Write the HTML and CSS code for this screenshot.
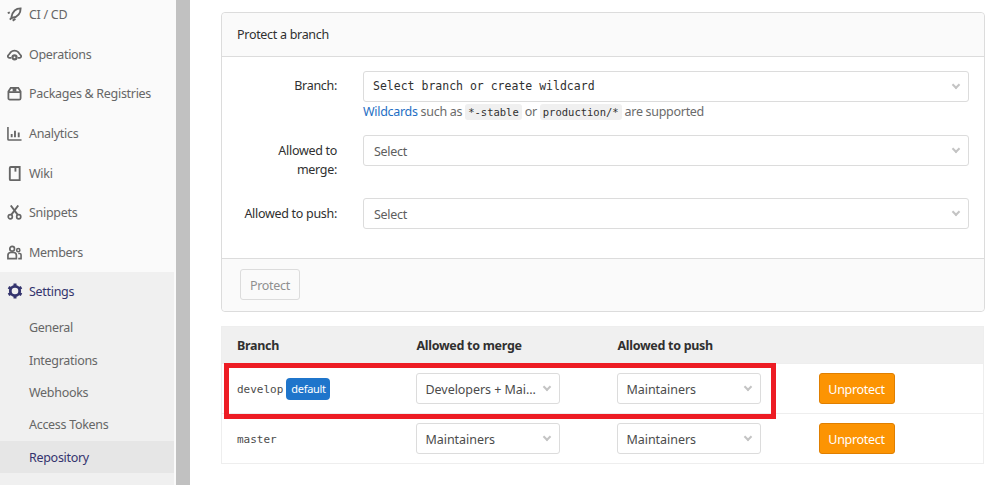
FILE: index.html
```html
<!DOCTYPE html>
<html lang="en">

<head>
  <meta charset="UTF-8">
  <title>Repository Settings</title>
  <link rel="stylesheet" href="styles.css">
</head>

<body>
  <div class="layout">
    <aside class="sidebar">
      <ul class="nav">
        <li class="nav-item">
          <svg class="nav-icon" viewBox="0 0 16 16"><path d="M14.500 1.500C9.500 1.500 6 5 4.800 10.500l1 1C11 10.500 14.500 7 14.500 1.500z" fill="none" stroke="currentColor" stroke-width="2"/><path d="M.8 6.500l2.200-.8M6 14.500l3-1.800M3 13.500l2-2" fill="none" stroke="currentColor" stroke-width="2"/></svg>
          CI / CD
        </li>
        <li class="nav-item">
          <svg class="nav-icon" viewBox="0 0 16 16"><path d="M4.500 11.500H2.500a1.500 1.500 0 0 1-1-2.700L4 5.500A5.500 5.500 0 0 1 12 5.500L14.500 8.800a1.500 1.500 0 0 1-1 2.700h-2" fill="none" stroke="currentColor" stroke-width="1.800"/><circle cx="8" cy="11" r="2.200" fill="none" stroke="currentColor" stroke-width="2.400"/></svg>
          Operations
        </li>
        <li class="nav-item">
          <svg class="nav-icon" viewBox="0 0 16 16"><path d="M4 2h8l2.500 4v7a1.500 1.500 0 0 1-1.500 1.500H3A1.500 1.500 0 0 1 1.500 13V6zM2 6.500h12" fill="none" stroke="currentColor" stroke-width="1.900"/><path d="M6 2h4v4H6z" fill="currentColor"/></svg>
          Packages &amp; Registries
        </li>
        <li class="nav-item">
          <svg class="nav-icon" viewBox="0 0 16 16"><path d="M1 1V14a1 1 0 0 0 1 1h13.500" fill="none" stroke="currentColor" stroke-width="1.700"/><path d="M5 8.500v3.500M8.500 5v7M12.500 7v5" fill="none" stroke="currentColor" stroke-width="2"/></svg>
          Analytics
        </li>
        <li class="nav-item">
          <svg class="nav-icon" viewBox="0 0 16 16"><path d="M4 1h9.500V15H4a1 1 0 0 1-1-1V2a1 1 0 0 1 1-1z" fill="none" stroke="currentColor" stroke-width="2"/><path d="M8 2h2v4H8z" fill="currentColor"/></svg>
          Wiki
        </li>
        <li class="nav-item">
          <svg class="nav-icon" viewBox="0 0 16 16"><path d="M4 0.500l7.500 10M12 0.500l-7.500 10" fill="none" stroke="currentColor" stroke-width="2"/><circle cx="3.500" cy="12.500" r="2.200" fill="none" stroke="currentColor" stroke-width="1.800"/><circle cx="12.500" cy="12.500" r="2.200" fill="none" stroke="currentColor" stroke-width="1.800"/></svg>
          Snippets
        </li>
        <li class="nav-item">
          <svg class="nav-icon" viewBox="0 0 16 16"><circle cx="5.500" cy="4" r="2.500" fill="none" stroke="currentColor" stroke-width="1.800"/><path d="M1 14.500V11a3 3 0 0 1 3-3h3a3 3 0 0 1 3 3v3.500z" fill="none" stroke="currentColor" stroke-width="1.800"/><circle cx="12" cy="5.500" r="1.700" fill="none" stroke="currentColor" stroke-width="1.700"/><path d="M12 9h1.500a1.500 1.500 0 0 1 1.500 1.500v4h-3" fill="none" stroke="currentColor" stroke-width="1.700"/></svg>
          Members
        </li>
      </ul>
      <div class="settings-group">
        <div class="nav-item nav-item-active">
          <svg class="nav-icon nav-icon-big" viewBox="0 0 16 16"><circle cx="8" cy="8" r="4.700" fill="none" stroke="currentColor" stroke-width="2.800"/><path d="M8 0.500v3M8 12.500v3M1.500 4.250l2.600 1.500M11.900 10.250l2.600 1.500M1.500 11.750l2.600-1.500M11.900 5.750l2.600-1.500" fill="none" stroke="currentColor" stroke-width="3"/></svg>
          Settings
        </div>
        <ul class="subnav">
          <li class="subnav-item">General</li>
          <li class="subnav-item">Integrations</li>
          <li class="subnav-item">Webhooks</li>
          <li class="subnav-item">Access Tokens</li>
          <li class="subnav-item subnav-item-active">Repository</li>
        </ul>
      </div>
    </aside>
    <div class="gutter"></div>

    <main class="content">
      <form class="card">
        <div class="card-header">Protect a branch</div>
        <div class="card-body">
          <div class="form-row form-row-branch">
            <label class="form-label form-label-first">Branch:</label>
            <div class="form-field">
              <div class="select select-mono">Select branch or create wildcard <span class="chevron"></span></div>
              <p class="help"><a class="link">Wildcards</a> such as <code>*-stable</code> or <code>production/*</code> are supported</p>
            </div>
          </div>
          <div class="form-row form-row-merge">
            <label class="form-label">Allowed to merge:</label>
            <div class="form-field">
              <div class="select select-muted">Select <span class="chevron"></span></div>
            </div>
          </div>
          <div class="form-row">
            <label class="form-label">Allowed to push:</label>
            <div class="form-field">
              <div class="select select-muted">Select <span class="chevron"></span></div>
            </div>
          </div>
        </div>
        <div class="card-footer">
          <button type="button" class="btn-protect">Protect</button>
        </div>
      </form>

      <div class="table-wrap">
        <table class="branches">
          <thead>
            <tr>
              <th class="col-branch">Branch</th>
              <th class="col-merge">Allowed to merge</th>
              <th class="col-push">Allowed to push</th>
              <th></th>
            </tr>
          </thead>
          <tbody>
            <tr>
              <td><span class="ref">develop</span> <span class="badge">default</span></td>
              <td><div class="select select-small"><span class="select-text">Developers + Mai...</span> <span class="chevron"></span></div></td>
              <td><div class="select select-small"><span class="select-text">Maintainers</span> <span class="chevron"></span></div></td>
              <td class="cell-action"><button type="button" class="btn-unprotect">Unprotect</button></td>
            </tr>
            <tr>
              <td><span class="ref">master</span></td>
              <td><div class="select select-small"><span class="select-text">Maintainers</span> <span class="chevron"></span></div></td>
              <td><div class="select select-small"><span class="select-text">Maintainers</span> <span class="chevron"></span></div></td>
              <td class="cell-action"><button type="button" class="btn-unprotect">Unprotect</button></td>
            </tr>
          </tbody>
        </table>
        <div class="highlight"></div>
      </div>
    </main>
  </div>
</body>

</html>
```

FILE: styles.css
```css
* {
  box-sizing: border-box;
}

html,
body {
  height: 100%;
  margin: 0;
  overflow: hidden;
}

body {
  font-family: "Noto Sans", Arial, sans-serif;
  font-size: 12.5px;
  letter-spacing: -0.3px;
  color: #303030;
  background: #fff;
}

ul {
  list-style: none;
  margin: 0;
  padding: 0;
}

.layout {
  display: flex;
  height: 485px;
}

.sidebar {
  width: 176px;
  flex: none;
  background: #fafafa;
  margin-top: -5.500px;
  color: #666;
}

.gutter {
  width: 14px;
  flex: none;
  background: #c1c1c1;
}

.nav-item {
  display: flex;
  align-items: center;
  height: 39.700px;
  padding-left: 7px;
}

.nav-icon {
  width: 15px;
  height: 15px;
  margin-right: 7px;
  flex: none;
}

.nav-icon-big {
  width: 16px;
  height: 16px;
  margin-right: 6px;
}

.settings-group {
  height: 220px;
  background: #f0f0f0;
  margin-right: 2px;
}

.nav-item-active {
  color: #34346e;
  height: 38px;
}

.subnav {
  margin-top: 1px;
}

.subnav-item {
  height: 32.400px;
  line-height: 33px;
  padding-left: 29px;
}

.subnav-item-active {
  background: #e6e6e6;
  color: #34346e;
}

.content {
  flex: 1;
  padding: 12px 11px 0 31px;
}

.card {
  border: 1px solid #dcdcdc;
  border-radius: 4px;
  height: 300px;
}

.card-header {
  height: 44px;
  line-height: 44px;
  padding-left: 15px;
  background: #fafafa;
  border-bottom: 1px solid #dcdcdc;
  border-radius: 4px 4px 0 0;
}

.card-body {
  height: 201px;
  padding: 14px 15px 0 0;
}

.form-row {
  display: flex;
}

.form-row-branch {
  height: 64px;
}

.form-row-merge {
  height: 63px;
}

.form-label {
  width: 98px;
  flex: none;
  margin: 0 26px 0 17px;
  text-align: right;
  line-height: 19px;
  padding-top: 6px;
}

.form-label-first {
  padding-top: 5px;
}

.form-field {
  flex: 1;
}

.select {
  position: relative;
  height: 31px;
  line-height: 31px;
  padding-left: 9px;
  border: 1px solid #dcdcdc;
  border-radius: 3px;
  background: #fff;
  color: #303030;
}

.select-mono {
  font-family: "DejaVu Sans Mono", monospace;
  font-size: 11.500px;
  line-height: 28px;
  letter-spacing: 0;
}

.select-muted {
  padding-left: 10px;
  color: #5e5e5e;
}

.select-small {
  width: 144px;
}

.select-text {
  letter-spacing: -0.05px;
  color: #4b4b4b;
}

.chevron {
  position: absolute;
  right: 9px;
  top: 10px;
  width: 6px;
  height: 6px;
  border-right: 2px solid #c4c4c4;
  border-bottom: 2px solid #c4c4c4;
  transform: rotate(45deg);
}

.help {
  margin: 0;
  line-height: 19px;
  color: #6b6b6b;
}

.link {
  color: #1f6fc4;
}

code {
  font-family: "DejaVu Sans Mono", monospace;
  font-size: 10.500px;
  letter-spacing: 0;
  color: #303030;
  background: #f0f0f0;
  border-radius: 3px;
  padding: 2px 3px;
}

.card-footer {
  height: 53px;
  padding: 10px 18px;
  background: #fafafa;
  border-top: 1px solid #dcdcdc;
  border-radius: 0 0 4px 4px;
}

.btn-protect {
  width: 60px;
  height: 31px;
  padding: 1px 0 0;
  font: inherit;
  letter-spacing: inherit;
  color: #8f8f8f;
  background: #fafafa;
  border: 1px solid #dcdcdc;
  border-radius: 3px;
}

.table-wrap {
  position: relative;
  margin-top: 14px;
  width: 763px;
}

.branches {
  width: 100%;
  table-layout: fixed;
  border-collapse: collapse;
  border: 1px solid #eee;
}

.branches th {
  height: 37px;
  text-align: left;
  padding-left: 16px;
  background: #f0f0f0;
  font-weight: 700;
}

.branches .col-branch {
  width: 179px;
  padding-left: 15px;
}

.col-merge,
.col-push {
  width: 201px;
}

.branches td {
  height: 50px;
  padding-left: 15px;
  border-top: 1px solid #eee;
}

.branches .cell-action {
  padding-left: 16px;
}

.ref {
  font-family: "DejaVu Sans Mono", monospace;
  font-size: 11px;
  letter-spacing: 0;
  color: #4b4b4b;
}

.badge {
  display: inline-block;
  height: 22px;
  line-height: 22px;
  padding: 0 4px 0 5px;
  font-size: 11px;
  color: #fff;
  background: #1f75cb;
  border-radius: 4px;
}

.btn-unprotect {
  width: 76px;
  height: 31px;
  padding: 1px 0 0;
  font: inherit;
  letter-spacing: inherit;
  color: #fff;
  background: #fc9403;
  border: 1px solid #e07f00;
  border-radius: 3px;
}

.highlight {
  position: absolute;
  left: 3px;
  top: 37px;
  width: 552px;
  height: 56px;
  border: 5px solid #ed1c24;
}
```
